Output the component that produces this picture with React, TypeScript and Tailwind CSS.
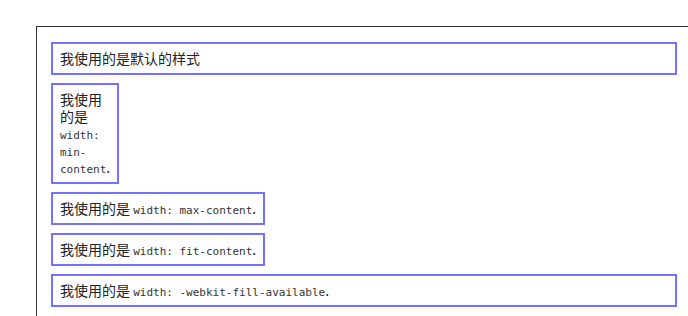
const boxCls =
  'border-2 border-[#7272ff] px-[7px] py-[6px] text-[14px] leading-[17px] text-[#222]'

function Code({ children }: { children: React.ReactNode }) {
  return (
    <code className="font-['DejaVu_Sans_Mono',monospace] text-[11px] leading-[11px] text-[#333]">
      {children}
    </code>
  )
}

export default function App() {
  return (
    <div className="h-[316px] w-[688px] overflow-hidden bg-white pl-[36px] pt-[26px] font-['Noto_Sans_CJK_SC','Microsoft_YaHei',sans-serif]">
      <div className="flex w-[656px] flex-col items-start gap-2 border border-[#333] px-[14px] pt-[15px] pb-[14px]">
        <div className={`${boxCls} w-full`}>我使用的是默认的样式</div>
        <div className={`${boxCls} w-min`}>
          我使用的是 <Code>width: min-content</Code>.
        </div>
        <div className={`${boxCls} w-max`}>
          我使用的是 <Code>width: max-content</Code>.
        </div>
        <div className={`${boxCls} w-fit`}>
          我使用的是 <Code>width: fit-content</Code>.
        </div>
        <div className={`${boxCls} w-full`}>
          我使用的是 <Code>width: -webkit-fill-available</Code>.
        </div>
      </div>
    </div>
  )
}
